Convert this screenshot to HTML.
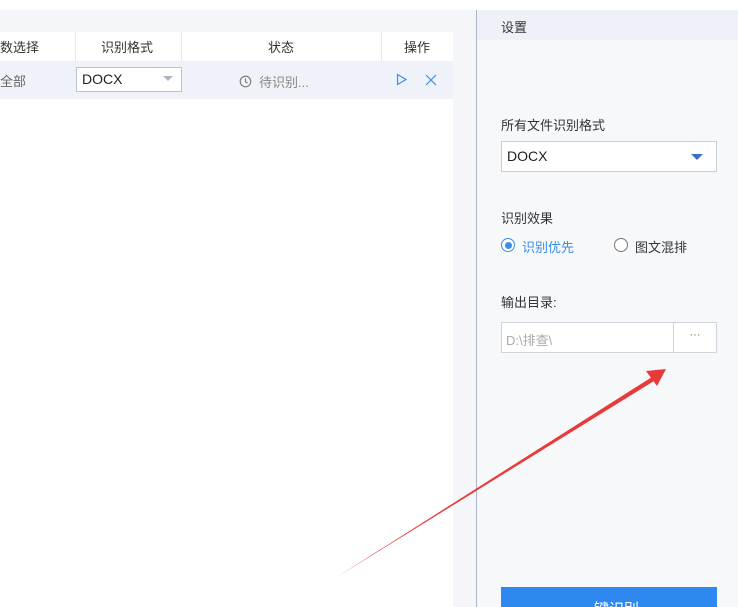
<!DOCTYPE html>
<html><head><meta charset="utf-8"><style>
*{margin:0;padding:0;box-sizing:border-box}
html,body{width:738px;height:607px;overflow:hidden}
body{background:#fff;font-family:"Liberation Sans","Noto Sans CJK SC",sans-serif;font-size:13px;color:#333;position:relative}
.a{position:absolute}
</style></head><body>
<div class="a" style="left:0;top:10px;width:476px;height:597px;background:#f4f6f9"></div>
<div class="a" style="left:0;top:32px;width:453px;height:575px;background:#fff"></div>
<div class="a" style="left:0;top:61px;width:453px;height:38px;background:#eff3f9"></div>
<div class="a" style="left:75px;top:32px;width:1px;height:29px;background:#e6e9ee"></div>
<div class="a" style="left:181px;top:32px;width:1px;height:29px;background:#e6e9ee"></div>
<div class="a" style="left:381px;top:32px;width:1px;height:29px;background:#e6e9ee"></div>
<div class="a" style="left:0;top:37px">数选择</div>
<div class="a" style="left:101px;top:37px">识别格式</div>
<div class="a" style="left:268px;top:37px">状态</div>
<div class="a" style="left:404px;top:37px">操作</div>
<div class="a" style="left:0;top:71px;color:#666">全部</div>
<div class="a" style="left:76px;top:67px;width:106px;height:25px;border:1px solid #b8c4d2;background:#fff;padding:3px 0 0 5px;font-size:14px;color:#222">DOCX</div>
<div class="a" style="left:163px;top:76px;width:0;height:0;border-left:5px solid transparent;border-right:5px solid transparent;border-top:5px solid #b0b6be"></div>
<svg class="a" style="left:239px;top:75px" width="13" height="13"><circle cx="6.5" cy="6.5" r="5.3" fill="none" stroke="#777" stroke-width="1.1"/><path d="M6.5 3.5V6.8L8.5 8" fill="none" stroke="#777" stroke-width="1.1"/></svg>
<div class="a" style="left:259px;top:72px;color:#888">待识别...</div>
<svg class="a" style="left:396px;top:73px" width="12" height="13"><path d="M1.5 1.5L10 6.5L1.5 11.5Z" fill="none" stroke="#3a8ee6" stroke-width="1.2"/></svg>
<svg class="a" style="left:425px;top:74px" width="12" height="12"><path d="M1 1L11 11M11 1L1 11" stroke="#3a8ee6" stroke-width="1.2"/></svg>
<div class="a" style="left:476px;top:10px;width:1px;height:597px;background:#a9b7c9"></div>
<div class="a" style="left:477px;top:10px;width:261px;height:597px;background:#f7f8fa"></div>
<div class="a" style="left:477px;top:10px;width:261px;height:30px;background:#eef2f8"></div>
<div class="a" style="left:501px;top:17px">设置</div>
<div class="a" style="left:501px;top:115px">所有文件识别格式</div>
<div class="a" style="left:501px;top:141px;width:216px;height:31px;border:1px solid #c8ced6;background:#fff;padding:6px 0 0 5px;font-size:14px;color:#222">DOCX</div>
<div class="a" style="left:691px;top:154px;width:0;height:0;border-left:6px solid transparent;border-right:6px solid transparent;border-top:6px solid #3a6fd0"></div>
<div class="a" style="left:501px;top:208px">识别效果</div>
<div class="a" style="left:501px;top:238px;width:14px;height:14px;border:1px solid #3a8ee6;border-radius:50%;background:#fff"></div>
<div class="a" style="left:504.5px;top:241.5px;width:7px;height:7px;border-radius:50%;background:#3a8ee6"></div>
<div class="a" style="left:522px;top:237px;color:#3a8ee6">识别优先</div>
<div class="a" style="left:614px;top:238px;width:14px;height:14px;border:1px solid #777;border-radius:50%;background:#fff"></div>
<div class="a" style="left:635px;top:237px">图文混排</div>
<div class="a" style="left:501px;top:292px">输出目录:</div>
<div class="a" style="left:501px;top:322px;width:173px;height:31px;border:1px solid #d0d5dc;background:#fff;padding:7px 0 0 4px;color:#aaa;font-size:13px">D:\排查\</div>
<div class="a" style="left:673px;top:322px;width:44px;height:31px;border:1px solid #d0d5dc;background:#fff;text-align:center;padding-top:6px;color:#666;font-size:11px">···</div>
<div class="a" style="left:501px;top:587px;width:216px;height:20px;background:#2f88f0;overflow:hidden"><div style="color:#fff;font-size:15px;text-align:center;padding-top:11px">一键识别</div></div>
<svg class="a" style="left:0;top:0" width="738" height="607"><path d="M337 577L652 377L654 381Z" fill="#e83a3a"/><path d="M666 369L646 371L657 386Z" fill="#e83a3a"/></svg>
</body></html>
